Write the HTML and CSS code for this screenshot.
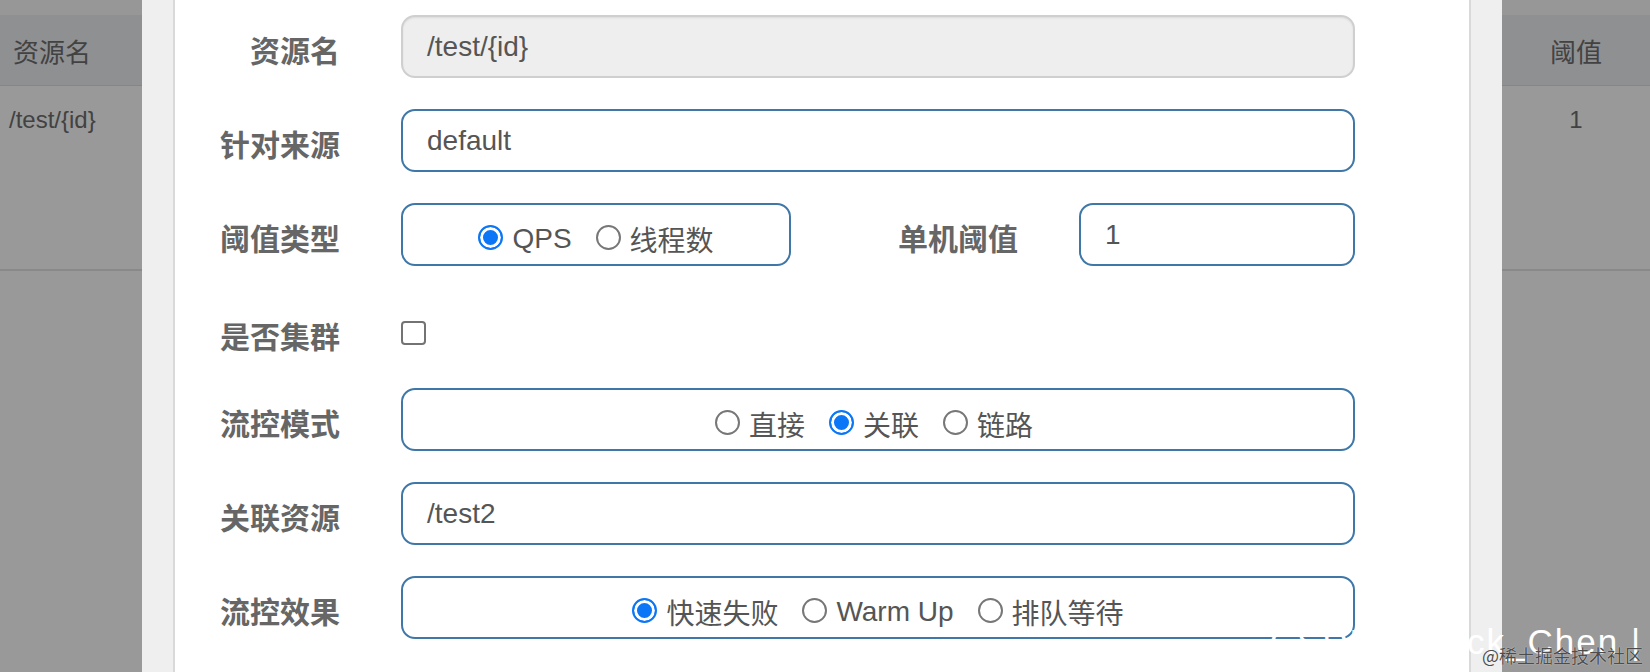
FILE: index.html
```html
<!DOCTYPE html>
<html lang="zh-CN">
<head>
<meta charset="utf-8">
<title>流控规则</title>
<link rel="stylesheet" href="styles.css">
</head>
<body>
<div class="page">
  <div class="bg-table left">
    <div class="bg-top"></div>
    <div class="th">资源名</div>
    <div class="td">/test/{id}</div>
  </div>

  <div class="modal">
    <div class="modal-content">
      <form class="form">
        <div class="row">
          <label class="lbl">资源名</label>
          <div class="ctl"><div class="input disabled">/test/{id}</div></div>
        </div>
        <div class="row">
          <label class="lbl">针对来源</label>
          <div class="ctl"><div class="input">default</div></div>
        </div>
        <div class="row">
          <label class="lbl">阈值类型</label>
          <div class="ctl">
            <div class="input radios narrow">
              <span class="opt"><span class="rd on"></span>QPS</span>
              <span class="opt"><span class="rd"></span>线程数</span>
            </div>
            <label class="lbl inner">单机阈值</label>
            <div class="input grow">1</div>
          </div>
        </div>
        <div class="row check">
          <label class="lbl">是否集群</label>
          <div class="ctl"><span class="cb"></span></div>
        </div>
        <div class="row">
          <label class="lbl">流控模式</label>
          <div class="ctl">
            <div class="input radios trail">
              <span class="opt"><span class="rd"></span>直接</span>
              <span class="opt"><span class="rd on"></span>关联</span>
              <span class="opt"><span class="rd"></span>链路</span>
            </div>
          </div>
        </div>
        <div class="row">
          <label class="lbl">关联资源</label>
          <div class="ctl"><div class="input">/test2</div></div>
        </div>
        <div class="row">
          <label class="lbl">流控效果</label>
          <div class="ctl">
            <div class="input radios">
              <span class="opt"><span class="rd on"></span>快速失败</span>
              <span class="opt"><span class="rd"></span>Warm Up</span>
              <span class="opt"><span class="rd"></span>排队等待</span>
            </div>
          </div>
        </div>
      </form>
    </div>
  </div>

  <div class="bg-table right">
    <div class="bg-top"></div>
    <div class="th">阈值</div>
    <div class="td">1</div>
  </div>

  <div class="wm-name">CSDN @Jack_Chen |</div>
  <div class="wm-site">@稀土掘金技术社区</div>
</div>
</body>
</html>
```

FILE: styles.css
```css
html, body {
  margin: 0;
  padding: 0;
}

body {
  width: 1650px;
  height: 672px;
  overflow: hidden;
  font-family: "Liberation Sans", "Noto Sans CJK SC", sans-serif;
}

.page {
  position: relative;
  display: flex;
  height: 672px;
  background: #999999;
}

/* dimmed table behind the dialog */
.bg-table {
  flex: none;
  color: #424242;
}
.bg-table.left { width: 142px; }
.bg-table.right { width: 148px; }

.bg-top {
  height: 15px;
  background: #979797;
}

.th {
  height: 71px;
  box-sizing: border-box;
  border-bottom: 1px solid #868686;
  background: #8f9092;
  font-family: "Noto Sans CJK SC", sans-serif;
  font-size: 26px;
  display: flex;
  align-items: center;
  padding-left: 13px;
}

.td {
  height: 185px;
  box-sizing: border-box;
  border-bottom: 2px solid #898989;
  font-size: 24px;
  line-height: 28px;
  padding: 20px 0 0 9px;
}

.right .th {
  justify-content: center;
  padding-left: 0;
}
.right .td {
  text-align: center;
  padding-left: 0;
}

/* dialog */
.modal {
  flex: none;
  width: 1360px;
  box-sizing: border-box;
  padding: 0 31px;
  background: #efefef;
}

.modal-content {
  height: 100%;
  box-sizing: border-box;
  background: #ffffff;
  border-left: 2px solid #d9d9d9;
  border-right: 2px solid #d9d9d9;
  padding-top: 15px;
}

.form {
  margin: 0;
}

.row {
  display: flex;
  align-items: center;
  height: 63px;
  margin-bottom: 31px;
}

.row.check {
  height: 60px;
  box-sizing: border-box;
  padding-top: 12px;
}

.lbl {
  flex: none;
  width: 165px;
  margin-right: 61px;
  padding-top: 5px;
  text-align: right;
  font-family: "Noto Sans CJK SC", sans-serif;
  font-weight: 700;
  font-size: 30px;
  line-height: 1.3;
  color: #666666;
  white-space: nowrap;
}

.lbl.inner {
  width: 227px;
}

.ctl {
  flex: none;
  width: 954px;
  display: flex;
  align-items: center;
}

.input {
  box-sizing: border-box;
  width: 100%;
  height: 63px;
  border: 2px solid #3f78a8;
  border-radius: 14px;
  padding: 0 24px;
  display: flex;
  align-items: center;
  font-size: 28px;
  color: #555555;
  background: #ffffff;
}

.input.disabled {
  background: #eeeeee;
  border-color: #cfcfcf;
  box-shadow: inset 0 1px 2px rgba(0, 0, 0, 0.08);
}

.input.narrow {
  flex: none;
  width: 390px;
}

.input.grow {
  flex: 1;
  width: auto;
}

.radios {
  justify-content: center;
  padding-top: 8px;
}

.radios.trail {
  padding-right: 32px;
}

.opt {
  display: inline-flex;
  align-items: center;
  font-family: "Liberation Sans", "Noto Sans CJK SC", sans-serif;
  font-size: 28px;
  color: #555555;
  white-space: nowrap;
}

.opt + .opt {
  margin-left: 24px;
}

.rd {
  flex: none;
  width: 25px;
  height: 25px;
  box-sizing: border-box;
  border-radius: 50%;
  border: 2px solid #777777;
  background: #ffffff;
  margin-right: 9px;
  margin-top: -2px;
}

.rd.on {
  border-color: #0b76f6;
  background: #0b76f6;
  box-shadow: inset 0 0 0 3px #ffffff;
}

.cb {
  display: block;
  width: 25px;
  height: 24px;
  box-sizing: border-box;
  border: 2px solid #737373;
  border-radius: 4px;
  background: #ffffff;
}

/* watermarks */
.wm-name {
  position: absolute;
  right: 8px;
  top: 622px;
  font-family: "Liberation Sans", sans-serif;
  font-size: 35px;
  letter-spacing: 2px;
  color: #ffffff;
  white-space: nowrap;
}

.wm-site {
  position: absolute;
  right: 7px;
  top: 642px;
  font-family: "Noto Sans CJK SC", sans-serif;
  font-size: 18px;
  color: #4d4d4d;
  text-shadow: 0 0 1px #ffffff;
  white-space: nowrap;
}
```
